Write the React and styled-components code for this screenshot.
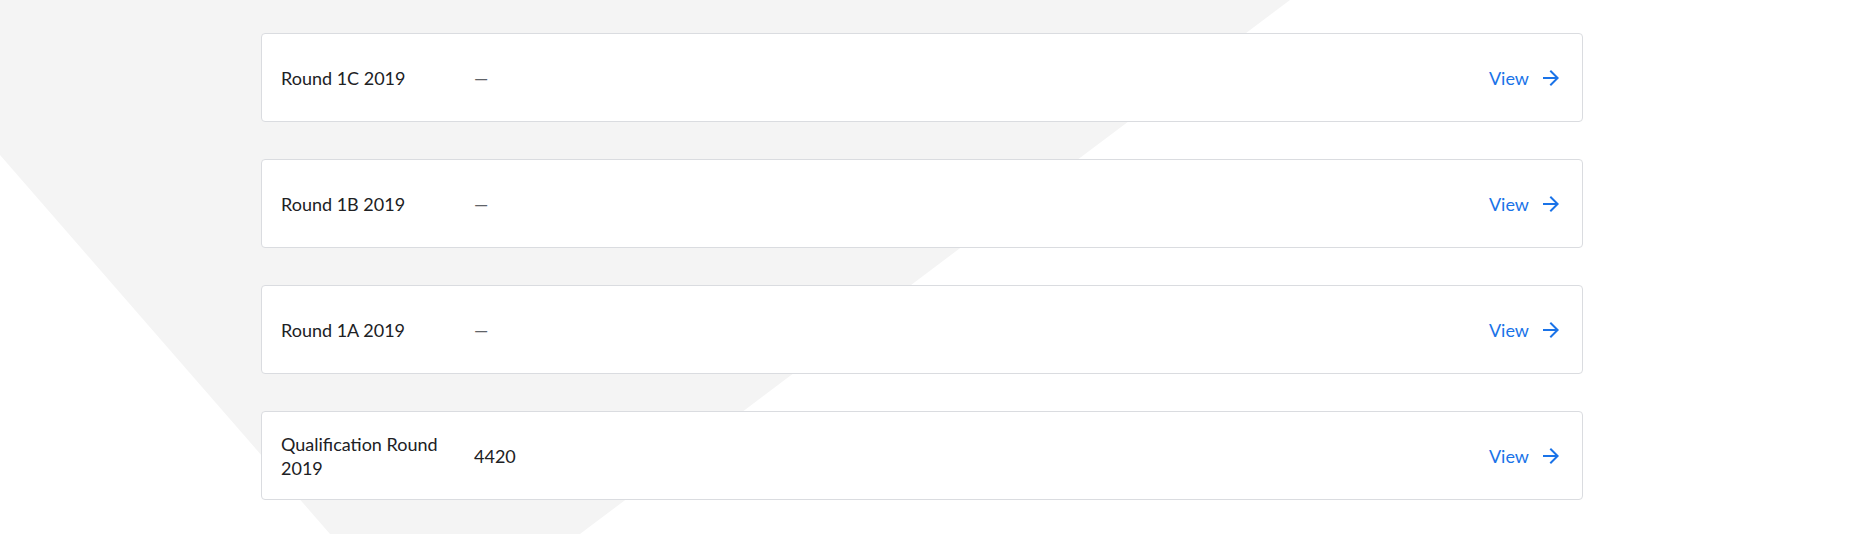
import React from 'react'
import styled, { createGlobalStyle } from 'styled-components'

const GlobalStyle = createGlobalStyle`
  html, body {
    margin: 0;
    padding: 0;
    background: #ffffff;
  }
  body {
    font-family: Lato, "Open Sans", Arial, sans-serif;
    color: #202124;
  }
`

const Page = styled.div`
  position: relative;
  height: 534px;
  overflow: hidden;
  background: #ffffff;

  &::before {
    content: '';
    position: absolute;
    inset: 0;
    background: #f4f4f4;
    clip-path: polygon(0 0, 1290px 0, 580px 534px, 330px 534px, 0 155px);
  }
`

const RoundList = styled.div`
  position: relative;
  width: 1322px;
  padding: 33px 0 0 261px;
  display: flex;
  flex-direction: column;
  gap: 37px;
`

const RoundCard = styled.div`
  box-sizing: border-box;
  height: 89px;
  display: flex;
  align-items: center;
  padding: 0 19px;
  background: #ffffff;
  border: 1px solid #dadce0;
  border-radius: 4px;
`

const RoundName = styled.div`
  flex: 0 0 170px;
  margin-right: 23px;
  font-size: 18px;
  line-height: 24px;
  color: #202124;
`

const Score = styled.div`
  flex: 1;
  font-size: 18px;
  line-height: 24px;
  color: ${p => (p.$empty ? '#5f6368' : '#202124')};
`

const ViewLink = styled.a`
  display: flex;
  align-items: center;
  gap: 10px;
  font-size: 18px;
  line-height: 24px;
  color: #1a73e8;
  text-decoration: none;
  cursor: pointer;
`

const ArrowIcon = () => (
  <svg width="24" height="24" viewBox="0 0 24 24" fill="#1a73e8">
    <path d="M12 4l-1.41 1.41L16.17 11H4v2h12.17l-5.58 5.59L12 20l8-8z" />
  </svg>
)

const rounds = [
  { name: 'Round 1C 2019', score: null },
  { name: 'Round 1B 2019', score: null },
  { name: 'Round 1A 2019', score: null },
  { name: 'Qualification Round 2019', score: '4420' },
]

const App = () => {
  return (
    <Page>
      <GlobalStyle />
      <RoundList>
        {rounds.map(r => (
          <RoundCard key={r.name}>
            <RoundName>{r.name}</RoundName>
            <Score $empty={!r.score}>{r.score || '—'}</Score>
            <ViewLink>
              View
              <ArrowIcon />
            </ViewLink>
          </RoundCard>
        ))}
      </RoundList>
    </Page>
  )
}

export default App
